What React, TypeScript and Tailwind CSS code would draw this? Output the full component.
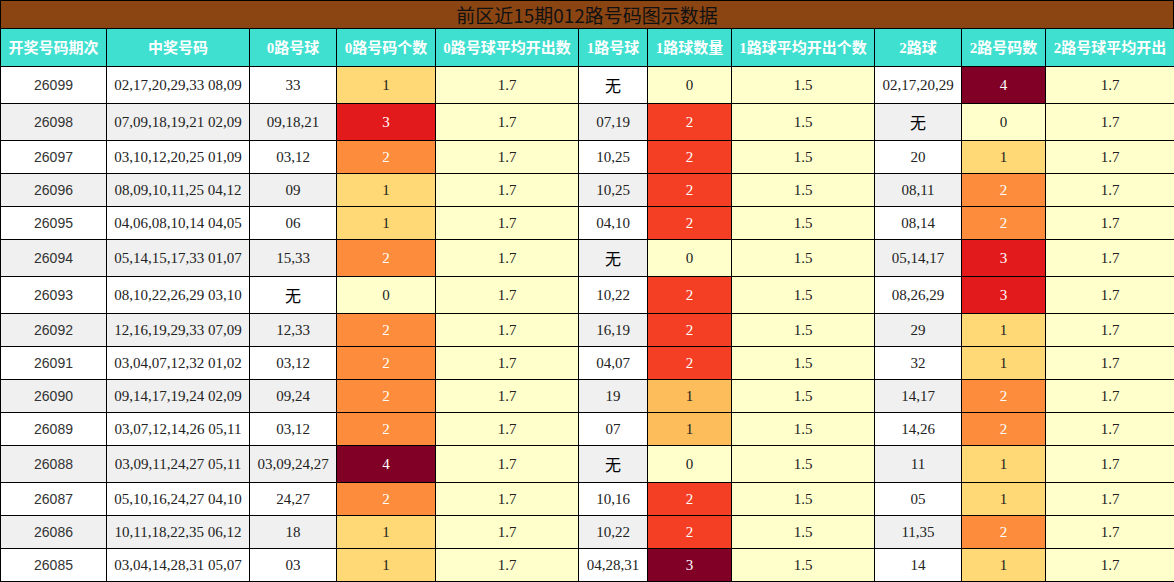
import React from "react";

type Row = {
  qi: string;
  nums: string;
  r0: string;
  c0: number;
  r1: string;
  c1: number;
  r2: string;
  c2: number;
};

const rows: Row[] = [
  { qi: "26099", nums: "02,17,20,29,33 08,09", r0: "33", c0: 1, r1: "无", c1: 0, r2: "02,17,20,29", c2: 4 },
  { qi: "26098", nums: "07,09,18,19,21 02,09", r0: "09,18,21", c0: 3, r1: "07,19", c1: 2, r2: "无", c2: 0 },
  { qi: "26097", nums: "03,10,12,20,25 01,09", r0: "03,12", c0: 2, r1: "10,25", c1: 2, r2: "20", c2: 1 },
  { qi: "26096", nums: "08,09,10,11,25 04,12", r0: "09", c0: 1, r1: "10,25", c1: 2, r2: "08,11", c2: 2 },
  { qi: "26095", nums: "04,06,08,10,14 04,05", r0: "06", c0: 1, r1: "04,10", c1: 2, r2: "08,14", c2: 2 },
  { qi: "26094", nums: "05,14,15,17,33 01,07", r0: "15,33", c0: 2, r1: "无", c1: 0, r2: "05,14,17", c2: 3 },
  { qi: "26093", nums: "08,10,22,26,29 03,10", r0: "无", c0: 0, r1: "10,22", c1: 2, r2: "08,26,29", c2: 3 },
  { qi: "26092", nums: "12,16,19,29,33 07,09", r0: "12,33", c0: 2, r1: "16,19", c1: 2, r2: "29", c2: 1 },
  { qi: "26091", nums: "03,04,07,12,32 01,02", r0: "03,12", c0: 2, r1: "04,07", c1: 2, r2: "32", c2: 1 },
  { qi: "26090", nums: "09,14,17,19,24 02,09", r0: "09,24", c0: 2, r1: "19", c1: 1, r2: "14,17", c2: 2 },
  { qi: "26089", nums: "03,07,12,14,26 05,11", r0: "03,12", c0: 2, r1: "07", c1: 1, r2: "14,26", c2: 2 },
  { qi: "26088", nums: "03,09,11,24,27 05,11", r0: "03,09,24,27", c0: 4, r1: "无", c1: 0, r2: "11", c2: 1 },
  { qi: "26087", nums: "05,10,16,24,27 04,10", r0: "24,27", c0: 2, r1: "10,16", c1: 2, r2: "05", c2: 1 },
  { qi: "26086", nums: "10,11,18,22,35 06,12", r0: "18", c0: 1, r1: "10,22", c1: 2, r2: "11,35", c2: 2 },
  { qi: "26085", nums: "03,04,14,28,31 05,07", r0: "03", c0: 1, r1: "04,28,31", c1: 3, r2: "14", c2: 1 },
];

const headers = [
  "开奖号码期次",
  "中奖号码",
  "0路号球",
  "0路号码个数",
  "0路号球平均开出数",
  "1路号球",
  "1路球数量",
  "1路球平均开出个数",
  "2路球",
  "2路号码数",
  "2路号球平均开出",
];

const widths = ["w-[106px]", "w-[143px]", "w-[87px]", "w-[99px]", "w-[143px]", "w-[69px]", "w-[84px]", "w-[143px]", "w-[87px]", "w-[84px]", "w-[129px]"];

// max 4 scale (0路 / 2路)
const scale4: Record<number, string> = {
  0: "bg-[#ffffcc] text-[#222]",
  1: "bg-[#fed976] text-[#222]",
  2: "bg-[#fd8d3c] text-white",
  3: "bg-[#e31a1c] text-white",
  4: "bg-[#800026] text-white",
};

// max 3 scale (1路)
const scale3: Record<number, string> = {
  0: "bg-[#ffffcc] text-[#222]",
  1: "bg-[#febd5b] text-[#222]",
  2: "bg-[#f43f25] text-white",
  3: "bg-[#800026] text-white",
};

const cell = "border border-black text-center px-1 py-2 leading-[16px] text-[15px] whitespace-nowrap";

const Val = ({ v }: { v: string }) =>
  v === "无" ? (
    <span className="text-[16px] leading-[20px] font-['Noto_Sans_CJK_SC',sans-serif] text-black">无</span>
  ) : (
    <>{v}</>
  );

export default function App() {
  return (
    <div className="w-[1174px] bg-white font-['Liberation_Serif','Noto_Sans_CJK_SC',serif] text-[#222]">
      <div className="h-[28px] border-x border-t border-black bg-[#8b4513] flex items-center justify-center text-[19px] leading-[24px] text-[#111] font-['Noto_Sans_CJK_SC',sans-serif]">
        前区近15期012路号码图示数据
      </div>
      <table className="w-[1174px] table-fixed border-collapse">
        <colgroup>
          {widths.map((w, i) => (
            <col key={i} className={w} />
          ))}
        </colgroup>
        <thead>
          <tr className="bg-[#40e0d0]">
            {headers.map((h) => (
              <th
                key={h}
                className="border border-black h-[38px] px-0 text-center text-white font-bold text-[15px] leading-[20px] whitespace-nowrap font-['Liberation_Serif','Noto_Sans_CJK_SC',serif]"
              >
                {h}
              </th>
            ))}
          </tr>
        </thead>
        <tbody>
          {rows.map((r, i) => {
            const base = i % 2 === 1 ? "bg-[#f0f0f0]" : "bg-white";
            return (
              <tr key={r.qi}>
                <td className={`${cell} ${base} font-['Liberation_Sans',sans-serif] !text-[14px] text-[#333]`}>{r.qi}</td>
                <td className={`${cell} ${base}`}>{r.nums}</td>
                <td className={`${cell} ${base}`}>
                  <Val v={r.r0} />
                </td>
                <td className={`${cell} ${scale4[r.c0]}`}>{r.c0}</td>
                <td className={`${cell} bg-[#ffffcc]`}>1.7</td>
                <td className={`${cell} ${base}`}>
                  <Val v={r.r1} />
                </td>
                <td className={`${cell} ${scale3[r.c1]}`}>{r.c1}</td>
                <td className={`${cell} bg-[#ffffcc]`}>1.5</td>
                <td className={`${cell} ${base}`}>
                  <Val v={r.r2} />
                </td>
                <td className={`${cell} ${scale4[r.c2]}`}>{r.c2}</td>
                <td className={`${cell} bg-[#ffffcc]`}>1.7</td>
              </tr>
            );
          })}
        </tbody>
      </table>
    </div>
  );
}
